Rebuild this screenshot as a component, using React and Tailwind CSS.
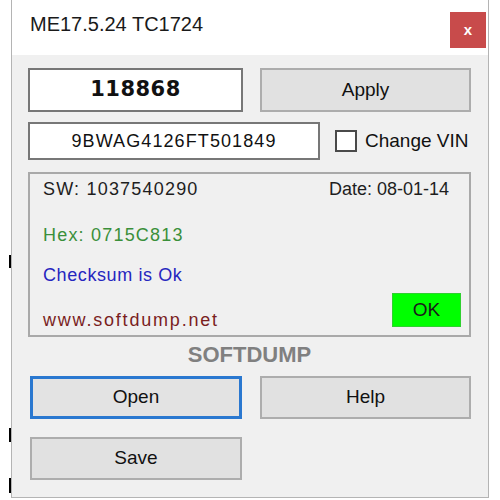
import React from 'react';

const font = { fontFamily: '"Liberation Sans", Arial, sans-serif' };

const Button = ({ label, focused, className = '' }) => (
    <button
        className={`flex items-center justify-center text-[19px] text-[#111] ${
            focused ? 'border-[3px] border-[#2a78d0] bg-[#e3e3e3]' : 'border-2 border-[#adadad] bg-[#e1e1e1]'
        } ${className}`}
    >
        {label}
    </button>
);

const App = () => {
    return (
        <div className="w-[500px] h-[500px] bg-white flex overflow-hidden" style={font}>
            {/* left gutter with the stray marks */}
            <div className="w-[11px] shrink-0 flex flex-col items-end">
                <div className="w-[2px] h-[13px] bg-black mt-[255px]" />
                <div className="w-[2px] h-[14px] bg-black mt-[160px]" />
                <div className="w-[2px] h-[15px] bg-black mt-[36px]" />
            </div>

            <div className="w-[478px] h-[498px] shrink-0 border-x border-b border-[#b4b4b4] flex flex-col bg-[#f0f0f0]">
                {/* title bar */}
                <div className="h-[55px] bg-white flex items-start justify-between">
                    <div className="pl-[18px] pt-[12px] text-[20px] leading-[24px] text-[#1a1a1a]">ME17.5.24 TC1724</div>
                    <div className="mt-[12px] mr-[2px] w-[36px] h-[36px] bg-[#c84b4b] flex items-center justify-center text-white font-bold text-[15px] leading-none pb-[2px]">
                        x
                    </div>
                </div>

                <div className="pl-[16px] pt-[13px] flex flex-col">
                    <div className="flex gap-[17px]">
                        <div className="w-[215px] h-[44px] bg-white border-2 border-[#777] flex items-center justify-center">
                            <span
                                className="text-[21px] font-bold tracking-[0.5px] text-[#111]"
                                style={{ fontFamily: '"DejaVu Sans", Verdana, sans-serif' }}
                            >
                                118868
                            </span>
                        </div>
                        <Button label="Apply" className="w-[211px] h-[44px]" />
                    </div>

                    <div className="flex items-center mt-[10px]">
                        <div className="w-[292px] h-[38px] bg-white border-2 border-[#777] flex items-center justify-center text-[18px] tracking-[1.1px] text-[#111]">
                            9BWAG4126FT501849
                        </div>
                        <div className="ml-[15px] w-[22px] h-[22px] bg-white border-2 border-[#4a4a4a]" />
                        <span className="ml-[8px] text-[19px] text-[#111]">Change VIN</span>
                    </div>

                    {/* ECU info panel */}
                    <div className="mt-[12px] w-[443px] h-[165px] border-2 border-[#a9a9a9] pl-[13px] pr-[8px] pt-[3px] flex flex-col text-[18px] leading-[24px]">
                        <div className="flex justify-between text-[#1e1e1e]">
                            <span className="tracking-[1.2px]">SW: 1037540290</span>
                            <span className="mr-[12px]">Date: 08-01-14</span>
                        </div>
                        <div className="mt-[22px] text-[#3a8f3a] tracking-[1.2px]">Hex: 0715C813</div>
                        <div className="mt-[16px] text-[#2626bf] tracking-[0.6px]">Checksum is Ok</div>
                        <div className="mt-[6px] flex justify-between items-end">
                            <span className="text-[#7a1e1e] tracking-[1.8px]">www.softdump.net</span>
                            <div className="mb-[5px] w-[69px] h-[34px] bg-[#00ff00] border border-[#2fd02f] flex items-center justify-center text-[19px] text-[#1a1a1a]">
                                OK
                            </div>
                        </div>
                    </div>

                    <div className="mt-[5px] w-[443px] text-center text-[22px] leading-[26px] font-bold text-[#808080]">SOFTDUMP</div>

                    <div className="mt-[8px] ml-[2px] flex gap-[18px]">
                        <Button label="Open" focused className="w-[212px] h-[43px]" />
                        <Button label="Help" className="w-[211px] h-[43px]" />
                    </div>
                    <div className="mt-[18px] ml-[2px]">
                        <Button label="Save" className="w-[212px] h-[43px]" />
                    </div>
                </div>
            </div>
        </div>
    );
};

export default App;
